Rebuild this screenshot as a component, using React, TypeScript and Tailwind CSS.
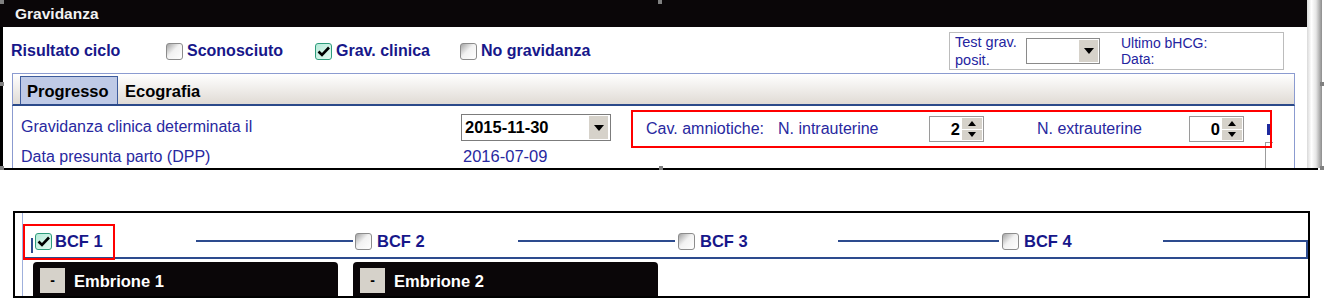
import React from "react";

const Cb = ({ checked = false }: { checked?: boolean }) =>
  checked ? (
    <span className="w-[17px] h-[17px] rounded-[3px] border border-[#2e9c7c] bg-[linear-gradient(135deg,#b5ead8_0%,#e6faf2_100%)] flex items-center justify-center shrink-0">
      <svg width="15" height="15" viewBox="0 0 15 15">
        <path d="M2.5 7.5 L6 11 L13 3.5" fill="none" stroke="#000" strokeWidth="2.6" />
      </svg>
    </span>
  ) : (
    <span className="block w-[17px] h-[17px] rounded-[3px] border border-[#8c8c8c] bg-[linear-gradient(135deg,#a3a3a3_0%,#f2f2f2_45%,#ffffff_100%)] shrink-0" />
  );

const Down = () => (
  <svg width="10" height="6" viewBox="0 0 10 6">
    <path d="M0 0 H10 L5 6 Z" fill="#000" />
  </svg>
);
const Up = () => (
  <svg width="8" height="5" viewBox="0 0 8 5">
    <path d="M0 5 H8 L4 0 Z" fill="#000" />
  </svg>
);
const Dn = () => (
  <svg width="8" height="5" viewBox="0 0 8 5">
    <path d="M0 0 H8 L4 5 Z" fill="#000" />
  </svg>
);

const Spinner = ({ v }: { v: string }) => (
  <div className="w-[55px] h-[26px] border border-[#9a9a9a] bg-white flex shrink-0">
    <span className="flex-1 text-right pr-[2px] font-bold text-[16.5px] text-black leading-[24px]">{v}</span>
    <div className="w-[20px] flex flex-col gap-[1px] py-[1px] mr-[1px]">
      <span className="flex-1 bg-[#d6d2ca] flex items-center justify-center"><Up /></span>
      <span className="flex-1 bg-[#d6d2ca] flex items-center justify-center"><Dn /></span>
    </div>
  </div>
);

const Handle = ({ cls }: { cls: string }) => <span className={"absolute w-[4px] h-[4px] bg-[#808080] " + cls} />;

const Seg = ({ w }: { w: string }) => <span className={"mt-[27px] h-[2px] bg-[#2d4b8e] shrink-0 " + w} />;

export default function App() {
  return (
    <div className="w-[1324px] h-[298px] bg-white relative overflow-hidden font-['Liberation_Sans',Arial,sans-serif]">
      {/* top fragment */}
      <div className="relative w-[1324px] h-[170px] flex flex-col">
        <div className="flex h-[168px]">
          <div className="w-[1307px] flex flex-col">
            <div className="h-[27px] bg-[#0a0608] flex items-center pl-[15px] text-[#f2f2f2] font-bold text-[15.5px]">
              Gravidanza
            </div>
            <div className="flex-1 border-l-[3px] border-black flex flex-col">
              <div className="h-[46px] flex items-center pl-[8px] pt-[2px]">
                <span className="w-[155px] font-bold text-[16px] text-[#17178a]">Risultato ciclo</span>
                <label className="w-[149px] flex items-center gap-[4px]">
                  <Cb />
                  <span className="font-bold text-[16px] text-[#17178a]">Sconosciuto</span>
                </label>
                <label className="w-[145px] flex items-center gap-[4px]">
                  <Cb checked />
                  <span className="font-bold text-[16px] text-[#17178a]">Grav. clinica</span>
                </label>
                <label className="flex-1 flex items-center gap-[4px]">
                  <Cb />
                  <span className="font-bold text-[16px] text-[#17178a]">No gravidanza</span>
                </label>
                <div className="w-[335px] h-[38px] mr-[23px] border border-[#bcbcbc] flex items-center pl-[5px] text-[14.5px] text-[#2424a0]">
                  <div className="w-[71px] leading-[18px]">
                    <div>Test grav.</div>
                    <div>posit.</div>
                  </div>
                  <div className="w-[74px] h-[26px] border border-[#8a8a8a] bg-white flex justify-end p-[1px]">
                    <span className="w-[19px] bg-[#d6d2ca] flex items-center justify-center"><Down /></span>
                  </div>
                  <div className="ml-[21px] leading-[16px] text-[14px]">
                    <div>Ultimo bHCG:</div>
                    <div>Data:</div>
                  </div>
                </div>
              </div>
              {/* tabs */}
              <div className="ml-[9px] mr-[12px] h-[33px] border-t border-x border-[#8b9bd0] border-b-2 border-b-[#2b4a8a] bg-[linear-gradient(180deg,#ffffff_0%,#e0dbd5_100%)] flex items-end">
                <div className="ml-[7px] w-[98px] h-[28px] bg-[#bfcae6] border border-b-0 border-[#3e5c9c] flex items-center pt-[2px] pl-[6px] font-bold text-[16.5px] text-black">
                  Progresso
                </div>
                <div className="ml-[7px] h-[28px] flex items-center pt-[2px] font-bold text-[16.5px] text-black">Ecografia</div>
              </div>
              {/* content */}
              <div className="relative ml-[9px] mr-[12px] flex-1 border-x border-[#8b9bd0] flex">
                <div className="w-[448px] pl-[8px] text-[16px] text-[#2828a0]">
                  <div className="mt-[12px] leading-[18px]">Gravidanza clinica determinata il</div>
                  <div className="mt-[12px] leading-[18px]">Data presunta parto (DPP)</div>
                </div>
                <div className="w-[170px]">
                  <div className="mt-[8px] w-[150px] h-[27px] border border-[#7c7c7c] bg-white flex items-center p-[1px]">
                    <span className="flex-1 pl-[2px] font-bold text-[16.5px] text-black">2015-11-30</span>
                    <span className="w-[19px] h-full bg-[#d6d2ca] flex items-center justify-center mr-[1px]"><Down /></span>
                  </div>
                  <div className="mt-[6px] leading-[18px] pl-[2px] text-[16.5px] text-[#2828a0]">2016-07-09</div>
                </div>
                <span className="absolute left-[1252px] top-[36px] w-[8px] h-[26px] border-l border-t border-[#9c9c9c]" />
                <div className="relative mt-[4px] w-[641px] h-[38px] border-2 border-[#ff0000] flex items-center pl-[13px] text-[16px] text-[#2828a0]">
                  <span className="w-[132px]">Cav. amniotiche:</span>
                  <span className="w-[151px]">N. intrauterine</span>
                  <Spinner v="2" />
                  <span className="w-[53px]" />
                  <span className="w-[152px]">N. extrauterine</span>
                  <Spinner v="0" />
                  <span className="ml-[23px] w-[3px] h-[11px] bg-[#1e2a9e]" />
                </div>
              </div>
            </div>
          </div>
          <div className="w-[15px] bg-[linear-gradient(90deg,#d9d9d9_0%,#ffffff_30%,#e6e6e6_60%,#8c8c8c_100%)]" />
        </div>
        <div className="h-[2px] w-[1318px] bg-black" />
        <Handle cls="left-0 top-0" />
        <Handle cls="left-[658px] top-0" />
        <Handle cls="left-0 top-[82px]" />
        <Handle cls="left-[1320px] top-[82px]" />
        <Handle cls="left-0 top-[166px]" />
        <Handle cls="left-[659px] top-[166px]" />
        <Handle cls="left-[1320px] top-[166px]" />
      </div>

      {/* bottom fragment */}
      <div className="mt-[41px] ml-[13px] w-[1297px] h-[87px] border-2 border-black overflow-hidden pl-[7px]">
        <div className="h-full border-l border-[#9fb0dc] flex flex-col">
          <div className="h-[46px] w-[1285px] border-b-2 border-[#2d4b8e] flex items-start">
            <div className="mt-[11px] w-[92px] h-[36px] border-2 border-[#ff0000] flex items-start shrink-0 relative z-10">
              <span className="ml-[6px] mt-[12px] w-[2px] h-[15px] bg-[#2d4b8e]" />
              <span className="ml-[2px] mt-[7px]"><Cb checked /></span>
              <span className="ml-[3px] mt-[6px] leading-[18px] font-bold text-[16.5px] text-[#17178a]">BCF 1</span>
            </div>
            <span className="w-[81px] shrink-0" />
            <Seg w="w-[157px]" />
            <span className="ml-[2px] mt-[20px] shrink-0"><Cb /></span>
            <span className="w-[146px] shrink-0 pl-[5px] mt-[19px] leading-[18px] font-bold text-[16.5px] text-[#17178a]">BCF 2</span>
            <Seg w="w-[157px]" />
            <span className="ml-[3px] mt-[20px] shrink-0"><Cb /></span>
            <span className="w-[143px] shrink-0 pl-[5px] mt-[19px] leading-[18px] font-bold text-[16.5px] text-[#17178a]">BCF 3</span>
            <Seg w="w-[161px]" />
            <span className="ml-[3px] mt-[20px] shrink-0"><Cb /></span>
            <span className="w-[144px] shrink-0 pl-[5px] mt-[19px] leading-[18px] font-bold text-[16.5px] text-[#17178a]">BCF 4</span>
            <span className="mt-[27px] w-[145px] h-[17px] border-t-2 border-r-2 border-[#2d4b8e] shrink-0" />
          </div>
          <div className="flex gap-[15px] ml-[10px] mt-[3px]">
            {["Embrione 1", "Embrione 2"].map((t) => (
              <div key={t} className="w-[305px] h-[40px] bg-[#0a0608] rounded-t-[4px] flex items-start">
                <span className="ml-[7px] mt-[6px] w-[25px] h-[25px] bg-[#d6d2ca] flex items-center justify-center text-black font-bold text-[14px]">-</span>
                <span className="ml-[9px] mt-[9px] leading-[20px] font-bold text-[16.5px] text-white">{t}</span>
              </div>
            ))}
          </div>
        </div>
      </div>
    </div>
  );
}
